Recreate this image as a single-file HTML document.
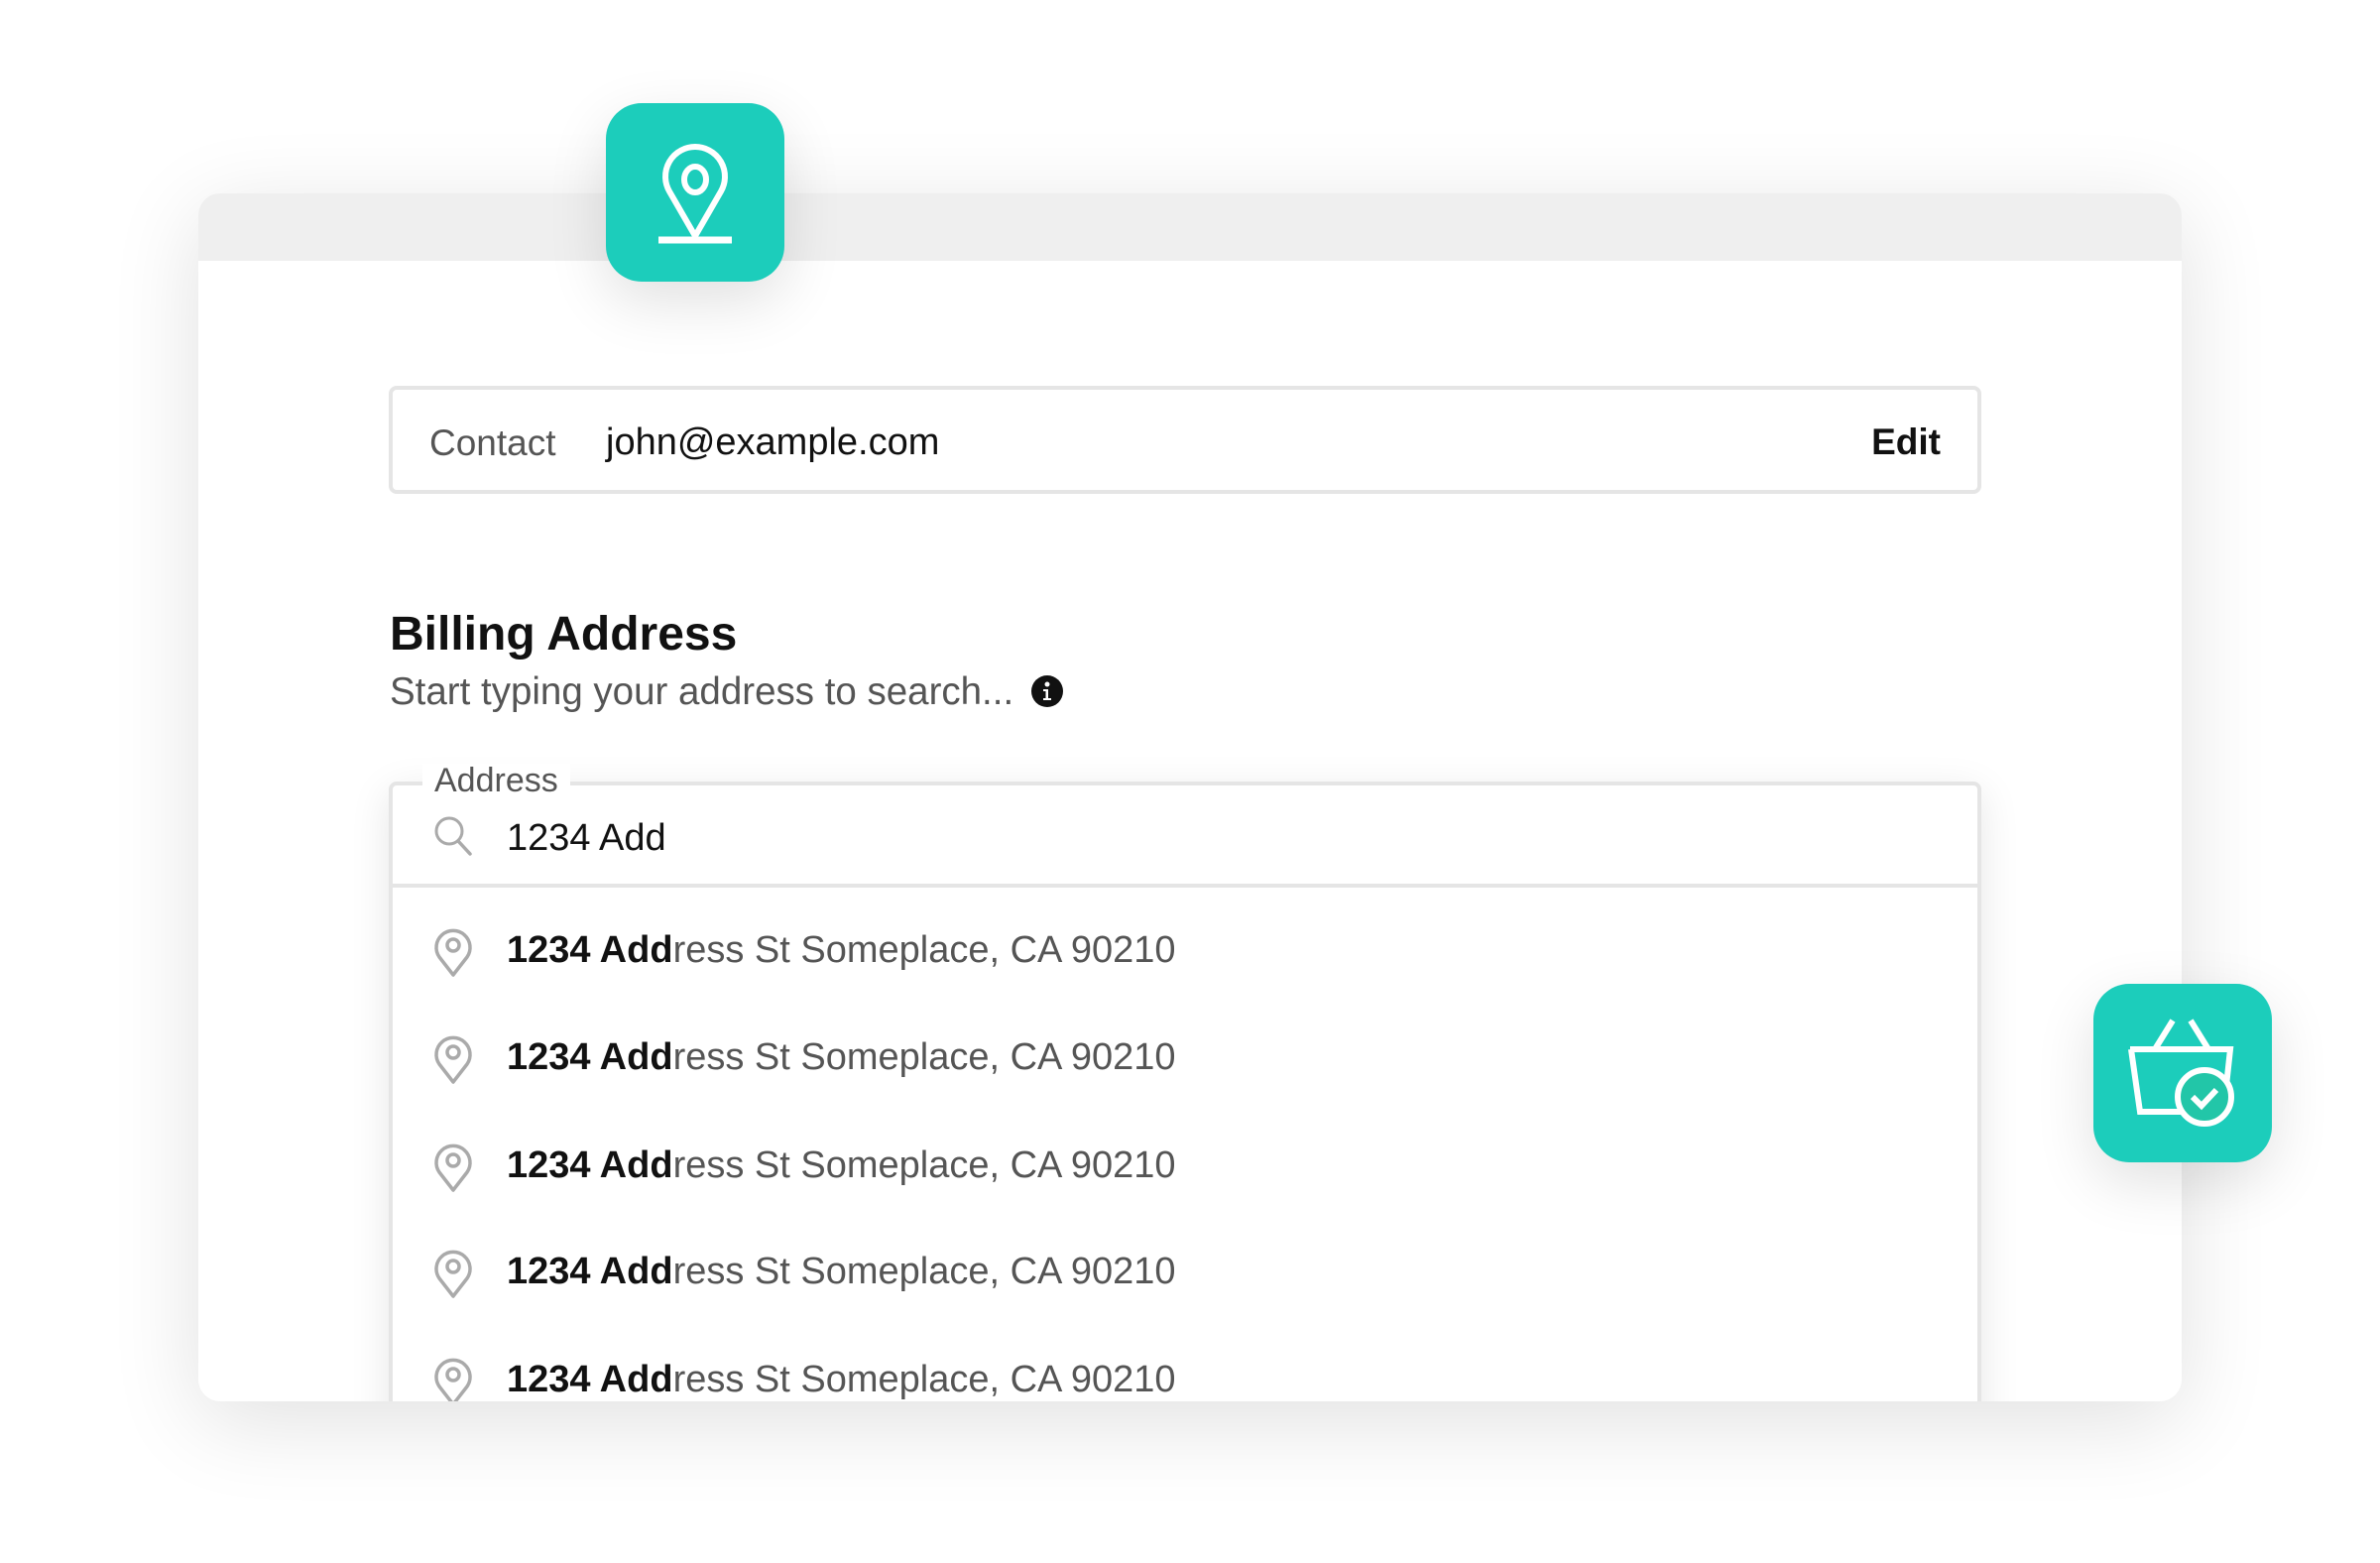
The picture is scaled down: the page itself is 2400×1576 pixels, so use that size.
<!DOCTYPE html>
<html><head><meta charset="utf-8"><style>
*{margin:0;padding:0;box-sizing:border-box}
html,body{width:2400px;height:1576px;background:#fff;overflow:hidden;font-family:"Liberation Sans",sans-serif}
.abs{position:absolute}
.card{left:200px;top:195px;width:2000px;height:1218px;background:#fff;border-radius:22px;box-shadow:0 20px 90px rgba(0,0,0,0.12);overflow:hidden}
.hdr{left:0;top:0;width:100%;height:68px;background:#efefef}
.box{border:4px solid #e5e5e5;border-radius:8px;background:#fff}
.t{white-space:nowrap;line-height:1}
.teal{background:#1ccdbb;border-radius:36px;box-shadow:0 20px 60px rgba(0,0,0,0.12)}
.item{font-size:38px;color:#555}
.item b{color:#111}
</style></head><body>
<div class="abs card">
  <div class="abs hdr"></div>
  <div class="abs box" style="left:192px;top:194px;width:1606px;height:109px"></div>
  <div class="abs t" style="left:233px;top:233px;font-size:37px;color:#555">Contact</div>
  <div class="abs t" style="left:411px;top:232px;font-size:38px;color:#111">john@example.com</div>
  <div class="abs t" style="right:243px;top:232px;font-size:37px;color:#111;font-weight:bold">Edit</div>

  <div class="abs t" style="left:193px;top:421px;font-size:48px;font-weight:bold;color:#111">Billing Address</div>
  <div class="abs t" style="left:193px;top:484px;font-size:38.5px;color:#555">Start typing your address to search...</div>
  <svg class="abs" style="left:840px;top:486px" width="32" height="32" viewBox="0 0 32 32"><circle cx="16" cy="16" r="16" fill="#111"/><circle cx="16" cy="9" r="2.5" fill="#fff"/><path d="M12 14h5v9h3v2h-8v-2h2.5v-7H12z" fill="#fff"/></svg>

  <div class="abs" style="left:192px;top:593px;width:1606px;height:700px;box-shadow:0 10px 40px rgba(0,0,0,0.10);border:4px solid #e5e5e5;border-radius:8px;background:#fff"></div>
  <div class="abs" style="left:196px;top:696px;width:1598px;height:4px;background:#e5e5e5"></div>
  <div class="abs t" style="left:226px;top:575px;font-size:34px;color:#555;background:#fff;padding:0 12px">Address</div>
  <svg class="abs" style="left:237px;top:627px" width="42" height="42" viewBox="0 0 42 42"><circle cx="16" cy="16" r="13" fill="none" stroke="#aaa" stroke-width="3"/><path d="M25 26l12 13" stroke="#aaa" stroke-width="3.5" stroke-linecap="round"/></svg>
  <div class="abs t" style="left:311px;top:631px;font-size:38px;color:#111">1234 Add</div>

  <div id="items"></div>
</div>

<div class="abs teal" style="left:611px;top:104px;width:180px;height:180px">
  <svg width="180" height="180" viewBox="0 0 180 180"><path d="M90 134 L64 89 A30 30 0 1 1 116 89 Z" fill="none" stroke="#fff" stroke-width="6" stroke-linejoin="round"/><ellipse cx="90" cy="77" rx="11" ry="13" fill="none" stroke="#fff" stroke-width="6"/><path d="M53 138h74" stroke="#fff" stroke-width="7"/></svg>
</div>
<div class="abs teal" style="left:2111px;top:992px;width:180px;height:180px">
  <svg width="180" height="180" viewBox="0 0 180 180"><path d="M37 66h101l-5 46M38 66l9 63h52" fill="none" stroke="#fff" stroke-width="6"/><path d="M62 66l18-29M98 37l18 29" stroke="#fff" stroke-width="6"/><circle cx="112" cy="114" r="27" fill="#22c6a8" stroke="#fff" stroke-width="6"/><path d="M100 114l9 9 15-16" fill="none" stroke="#fff" stroke-width="6"/></svg>
</div>

<script>
var h='';var ys=[762,870,979,1086,1195];
ys.forEach(function(y){
h+='<svg class="abs" style="left:237px;top:'+(y-30)+'px" width="40" height="62" viewBox="0 0 40 62"><path d="M20 56 L6 38 A17 17 0 1 1 34 38 Z" fill="none" stroke="#aaa" stroke-width="3.5" stroke-linejoin="round"/><circle cx="20" cy="26" r="6" fill="none" stroke="#aaa" stroke-width="3.5"/></svg>';
h+='<div class="abs t item" style="left:311px;top:'+(y-18)+'px"><b>1234 Add</b>ress St Someplace, CA 90210</div>';
});
document.getElementById('items').innerHTML=h;
</script>
</body></html>
